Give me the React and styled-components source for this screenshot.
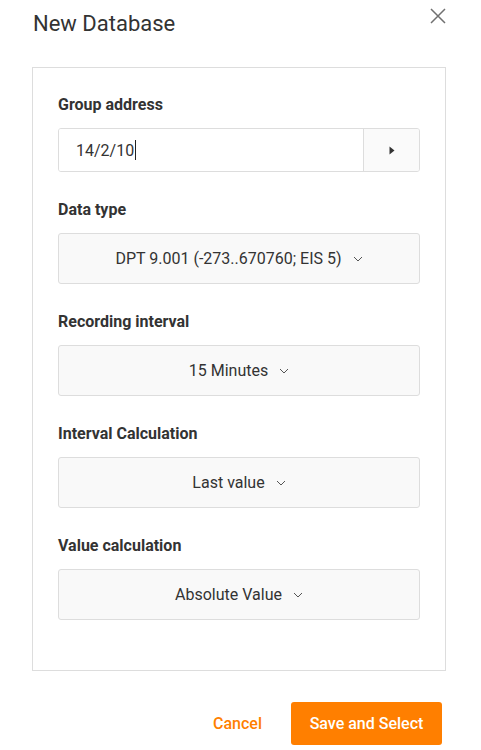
import React from "react";
import styled, { createGlobalStyle } from "styled-components";

const GlobalStyle = createGlobalStyle`
  * { box-sizing: border-box; }
  body {
    margin: 0;
    background: #fff;
    font-family: Roboto, "Liberation Sans", sans-serif;
    color: #333;
  }
`;

const Dialog = styled.div`
  width: 481px;
  height: 750px;
  display: flex;
  flex-direction: column;
`;

const Header = styled.div`
  display: flex;
  justify-content: space-between;
  align-items: flex-start;
  padding: 8px 35px 0 33px;
  height: 67px;
`;

const Title = styled.h2`
  margin: 2px 0 0;
  font-size: 22px;
  line-height: 28px;
  font-weight: 400;
  color: #333;
`;

const CloseButton = styled.button`
  border: 0;
  background: none;
  padding: 0;
  width: 16px;
  height: 16px;
  cursor: pointer;
  display: flex;

  svg { display: block; }
`;

const Panel = styled.div`
  margin: 0 35px 0 32px;
  border: 1px solid #ddd;
  padding: 27px 25px 50px;
  display: flex;
  flex-direction: column;
  gap: 28px;
`;

const Field = styled.div`
  display: flex;
  flex-direction: column;
  gap: 13px;
`;

const Label = styled.label`
  font-size: 16px;
  line-height: 20px;
  font-weight: 700;
  color: #333;
`;

const InputGroup = styled.div`
  display: flex;
  height: 44px;
  border: 1px solid #ddd;
  border-radius: 3px;
  overflow: hidden;
`;

const TextInput = styled.div`
  flex: 1;
  display: flex;
  align-items: center;
  padding-left: 17px;
  font-size: 16px;
  color: #333;
  background: #fff;
`;

const Caret = styled.span`
  display: inline-block;
  width: 1px;
  height: 20px;
  background: #222;
  margin-left: 1px;
`;

const AddonButton = styled.button`
  width: 56px;
  border: 0;
  border-left: 1px solid #ddd;
  background: #fafafa;
  display: flex;
  align-items: center;
  justify-content: center;
  padding: 0;
`;

const Select = styled.button`
  height: 51px;
  width: 100%;
  border: 1px solid #ddd;
  border-radius: 3px;
  background: #f9f9f9;
  display: flex;
  align-items: center;
  justify-content: center;
  gap: 11px;
  font-family: inherit;
  font-size: 16px;
  color: #333;
  padding: 0;
`;

const Footer = styled.div`
  display: flex;
  justify-content: flex-end;
  align-items: center;
  gap: 15px;
  margin-top: 31px;
  padding-right: 39px;
`;

const TextButton = styled.button`
  border: 0;
  background: none;
  font-family: inherit;
  font-size: 16px;
  font-weight: 500;
  color: #ff8000;
  padding: 0 14px;
  height: 43px;
`;

const PrimaryButton = styled.button`
  border: 0;
  border-radius: 3px;
  background: #ff7f00;
  color: #fff;
  font-family: inherit;
  font-size: 16px;
  font-weight: 500;
  width: 151px;
  height: 43px;
  padding-top: 1px;
`;

const Chevron = () => (
  <svg width="10" height="6" viewBox="0 0 10 6" fill="none">
    <path d="M1 1l4 4 4-4" stroke="#555" strokeWidth="1" />
  </svg>
);

const fields = [
  { label: "Data type", value: "DPT 9.001 (-273..670760; EIS 5)" },
  { label: "Recording interval", value: "15 Minutes" },
  { label: "Interval Calculation", value: "Last value" },
  { label: "Value calculation", value: "Absolute Value" },
];

export default function App() {
  return (
    <Dialog>
      <GlobalStyle />
      <Header>
        <Title>New Database</Title>
        <CloseButton aria-label="Close">
          <svg width="16" height="16" viewBox="0 0 16 16">
            <path d="M1 1l14 14M15 1L1 15" stroke="#707070" strokeWidth="1.5" />
          </svg>
        </CloseButton>
      </Header>

      <Panel>
        <Field>
          <Label>Group address</Label>
          <InputGroup>
            <TextInput>
              14/2/10
              <Caret />
            </TextInput>
            <AddonButton>
              <svg width="6" height="9" viewBox="0 0 6 9">
                <path d="M0.5 0.5L5.5 4.5L0.5 8.5Z" fill="#333" />
              </svg>
            </AddonButton>
          </InputGroup>
        </Field>

        {fields.map((f) => (
          <Field key={f.label}>
            <Label>{f.label}</Label>
            <Select>
              <span>{f.value}</span>
              <Chevron />
            </Select>
          </Field>
        ))}
      </Panel>

      <Footer>
        <TextButton>Cancel</TextButton>
        <PrimaryButton>Save and Select</PrimaryButton>
      </Footer>
    </Dialog>
  );
}
